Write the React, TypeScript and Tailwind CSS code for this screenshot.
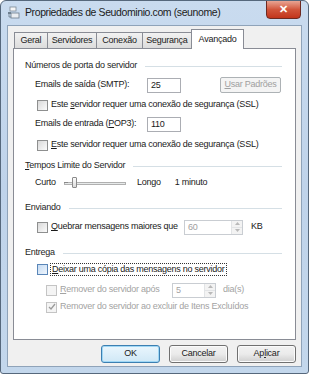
import React from "react";

const font = { fontFamily: '"Liberation Sans", Arial, sans-serif' };

function Check({ checked = false, disabled = false, focus = false }: { checked?: boolean; disabled?: boolean; focus?: boolean }) {
  return (
    <div
      className={
        "w-[11px] h-[11px] shrink-0 border flex items-center justify-center " +
        (disabled ? "border-[#c4c4c4] bg-[#f4f4f4]" : focus ? "border-[#5a86b8] bg-gradient-to-br from-[#c7dcf3] to-[#eef5fc]" : "border-[#8e8f8f] bg-gradient-to-br from-[#d9d9d9] to-[#fbfbfb]")
      }
    >
      {checked && (
        <svg width="8" height="8" viewBox="0 0 8 8">
          <path d="M1 4 L3 6 L7 1" stroke="#9a9a9a" strokeWidth="1.3" fill="none" />
        </svg>
      )}
    </div>
  );
}

function GroupLabel({ children, mt }: { children: React.ReactNode; mt: string }) {
  return (
    <div className={"flex items-center h-[16px] " + mt}>
      <span className="text-[#1e1e1e] pr-[8px]">{children}</span>
      <div className="flex-1 h-px bg-[#d5dfe5] mr-[1px]" />
    </div>
  );
}

function Spin({ value, w, disabled }: { value: string; w: string; disabled?: boolean }) {
  return (
    <div className={"h-[15px] border border-[#c9cdd2] bg-white flex " + w}>
      <div className={"flex-1 pl-[3px] leading-[13px] " + (disabled ? "text-[#a0a0a0]" : "")}>{value}</div>
      <div className="w-[11px] flex flex-col border-l border-[#e2e4e6]">
        <div className="flex-1 flex items-center justify-center bg-[#f3f3f3] border-b border-[#e2e4e6]">
          <svg width="5" height="3" viewBox="0 0 5 3"><path d="M0 3 L2.5 0 L5 3Z" fill="#b9b9b9" /></svg>
        </div>
        <div className="flex-1 flex items-center justify-center bg-[#f3f3f3]">
          <svg width="5" height="3" viewBox="0 0 5 3"><path d="M0 0 L2.5 3 L5 0Z" fill="#b9b9b9" /></svg>
        </div>
      </div>
    </div>
  );
}

function Btn({ children, primary }: { children: React.ReactNode; primary?: boolean }) {
  return (
    <div
      className={
        "w-[59px] h-[18px] rounded-[3px] border flex items-center justify-center " +
        (primary
          ? "border-[#3c7fb1] bg-gradient-to-b from-[#eaf6fd] to-[#d0e8f6] shadow-[inset_0_0_0_1px_#9fd7f5]"
          : "border-[#707070] bg-gradient-to-b from-[#f2f2f2] via-[#ebebeb] to-[#cfcfcf] shadow-[inset_0_0_0_1px_#fbfbfb]")
      }
    >
      {children}
    </div>
  );
}

export default function App() {
  const tabs: [string, string][] = [
    ["Geral", "w-[34px]"],
    ["Servidores", "w-[50px]"],
    ["Conexão", "w-[47px]"],
    ["Segurança", "w-[50px]"],
  ];
  return (
    <div
      style={font}
      className="w-[309px] h-[374px] text-[9px] tracking-[-0.25px] text-[#1a1a1a] whitespace-nowrap relative flex flex-col rounded-t-[6px] rounded-b-[3px] border border-[#56687c] bg-gradient-to-b from-[#c9dbef] via-[#bfd3ea] to-[#c3d7ec] overflow-hidden"
    >
      {/* title bar */}
      <div className="h-[24px] flex items-center pl-[6px] shrink-0">
        <svg width="14" height="14" viewBox="0 0 14 14" className="mr-[4px]">
          <rect x="3" y="1" width="6" height="4" fill="#f6f6f6" stroke="#7d8a96" strokeWidth="0.8" />
          <rect x="1" y="6" width="3" height="2" fill="#6e7f8f" />
          <rect x="4" y="7" width="8" height="5" fill="#e9edf1" stroke="#6b7c8c" strokeWidth="0.8" />
          <path d="M2 8 L2 11 L4 11" stroke="#6b7c8c" strokeWidth="0.8" fill="none" />
        </svg>
        <span className="text-[10.5px] tracking-[-0.4px] text-[#1b1b1b]">Propriedades de Seudominio.com (seunome)</span>
      </div>
      <div className="absolute right-[7px] top-[-1px] w-[35px] h-[19px] rounded-b-[4px] border border-[#6d2a22] bg-gradient-to-b from-[#e8a493] via-[#d1553b] to-[#c2341b] flex items-center justify-center">
        <span className="text-white text-[11px] font-bold leading-none">✕</span>
      </div>

      {/* body */}
      <div className="flex-1 mx-[6px] mb-[6px] border border-[#8fa3b9] bg-[#f0f0f0] flex flex-col px-[5px]">
        {/* tabs */}
        <div className="flex items-end h-[21px] mt-[1px] pl-[1px]">
          {tabs.map(([t, w], i) => (
            <div
              key={t}
              className={
                "h-[16px] border border-b-0 border-[#898c95] bg-gradient-to-b from-[#f2f2f2] to-[#dcdcdc] flex items-center justify-center " +
                w +
                (i > 0 ? " -ml-px" : "")
              }
            >
              {t}
            </div>
          ))}
          <div className="h-[20px] w-[53px] -ml-px border border-b-0 border-[#898c95] bg-white flex justify-center items-start pt-[3px] relative z-10 -mb-px">
            Avançado
          </div>
        </div>

        {/* panel */}
        <div className="h-[292px] border border-[#898c95] bg-white pl-[11px] pr-[12px] pt-[9px]">
          <GroupLabel mt="">Números de porta do servidor</GroupLabel>
          <div className="flex items-center h-[16px] mt-[3px] pl-[10px]">
            <span className="w-[112px]">Emails de saída (SMTP):</span>
            <div className="w-[34px] h-[15px] border border-[#abadb3] pl-[3px] leading-[13px]">25</div>
            <div className="ml-auto mr-[2px] w-[61px] h-[16px] rounded-[2px] border border-[#adb2b5] bg-[#f4f4f4] text-[#a0a0a0] flex items-center justify-center">
              <span><u>U</u>sar Padrões</span>
            </div>
          </div>
          <div className="flex items-center h-[16px] mt-[4px] pl-[12px] gap-[3px]">
            <Check />
            <span>Este <u>s</u>ervidor requer uma conexão de segurança (SSL)</span>
          </div>
          <div className="flex items-center h-[16px] mt-[3px] pl-[10px]">
            <span className="w-[112px]">Emails de entrada (<u>P</u>OP3):</span>
            <div className="w-[34px] h-[15px] border border-[#abadb3] pl-[3px] leading-[13px]">110</div>
          </div>
          <div className="flex items-center h-[16px] mt-[5px] pl-[12px] gap-[3px]">
            <Check />
            <span><u>E</u>ste servidor requer uma conexão de segurança (SSL)</span>
          </div>

          <GroupLabel mt="mt-[5px]"><u>T</u>empos Limite do Servidor</GroupLabel>
          <div className="flex items-center h-[16px] mt-[1px] pl-[10px]">
            <span className="w-[29px]">Curto</span>
            <div className="relative w-[62px] h-[12px] flex items-center">
              <div className="w-full h-[3px] border border-[#b0b0b0] bg-[#e7eaea]" />
              <div className="absolute left-[8px] top-0 w-[5px] h-[11px] border border-[#8a8a8a] rounded-[1px] bg-gradient-to-b from-[#fbfbfb] to-[#dcdcdc]" />
              <div className="absolute left-0 top-[5px] w-[4px] h-px bg-[#8a8a8a]" />
            </div>
            <span className="ml-[11px]">Longo</span>
            <span className="ml-[14px]">1 minuto</span>
          </div>

          <GroupLabel mt="mt-[9px]">Enviando</GroupLabel>
          <div className="flex items-center h-[16px] mt-[3px] pl-[12px]">
            <Check />
            <span className="ml-[3px] w-[133px]"><u>Q</u>uebrar mensagens maiores que</span>
            <Spin value="60" w="w-[59px]" disabled />
            <span className="ml-[8px]">KB</span>
          </div>

          <GroupLabel mt="mt-[10px]">Entrega</GroupLabel>
          <div className="flex items-center h-[16px] mt-0 pl-[12px] gap-[2px]">
            <Check focus />
            <span className="border border-dotted border-[#333] px-px leading-[11px]"><u>D</u>eixar uma cópia das mensagens no servidor</span>
          </div>
          <div className="flex items-center h-[16px] mt-[5px] pl-[21px] text-[#a3a3a3]">
            <Check disabled />
            <span className="ml-[3px] w-[112px]"><u>R</u>emover do servidor após</span>
            <Spin value="5" w="w-[44px]" />
            <span className="ml-[7px]">dia(s)</span>
          </div>
          <div className="flex items-center h-[16px] mt-[1px] pl-[21px] text-[#a3a3a3] gap-[3px]">
            <Check disabled checked />
            <span>Remover do servidor ao excluir de Itens Excluídos</span>
          </div>
        </div>

        {/* buttons */}
        <div className="flex justify-end gap-[9px] mt-[5px] pr-0">
          <Btn primary>OK</Btn>
          <Btn>Cancelar</Btn>
          <Btn>Ap<u>l</u>icar</Btn>
        </div>
      </div>
    </div>
  );
}
